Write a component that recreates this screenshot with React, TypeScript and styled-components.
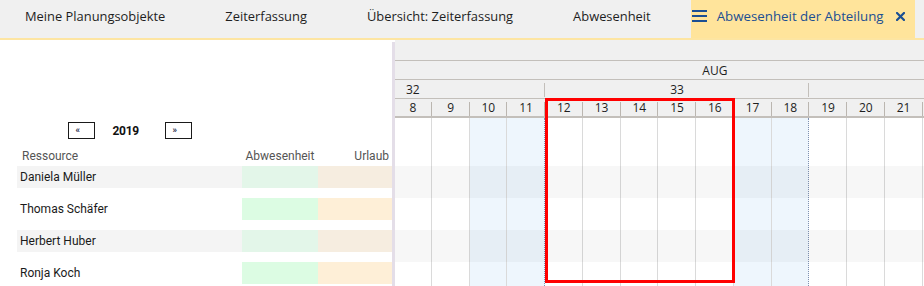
import styled, { createGlobalStyle } from "styled-components";

const DAY_W = 37.75;
const TRACK_SHIFT = -265.25;
// days that fall inside the visible part of the chart
const FIRST_VISIBLE = 8;
const LAST_VISIBLE = 21;

const GlobalStyle = createGlobalStyle`
  html, body {
    margin: 0;
    padding: 0;
    background: #ffffff;
    overflow: hidden;
  }
  * {
    box-sizing: border-box;
  }
`;

const Page = styled.div`
  display: flex;
  flex-direction: column;
  height: 100vh;
  font-family: "Open Sans", sans-serif;
`;

const TabBar = styled.nav`
  display: flex;
  align-items: stretch;
  height: 40px;
  background: #f0f0f0;
  border-bottom: 2px solid #fde5a2;
`;

const Tab = styled.div`
  display: flex;
  align-items: center;
  padding: 0 30px 6px;
  font-size: 12.9px;
  color: #1e1e1e;
  white-space: nowrap;

  &:first-child {
    padding-left: 25px;
  }
`;

const ActiveTab = styled.div`
  display: flex;
  align-items: center;
  gap: 10px;
  margin-left: 10px;
  padding: 0 10px 6px 1px;
  background: #ffe49b;
  color: #1b4f93;
  font-size: 13.3px;
  white-space: nowrap;
`;

const CloseIcon = styled.svg`
  margin-left: 2px;
`;

const Main = styled.div`
  display: flex;
  flex: 1;
  min-height: 0;
`;

const LeftPanel = styled.section`
  width: 392px;
  flex-shrink: 0;
  padding-left: 17px;
  font-family: Roboto, sans-serif;
  font-size: 12px;
`;

const Pager = styled.div`
  display: flex;
  align-items: center;
  justify-content: center;
  width: 225px;
  margin-top: 82px;
  height: 17px;
`;

const PageButton = styled.button`
  width: 27px;
  height: 17px;
  padding: 0 0 1px 7px;
  border: 1px solid #1a1a1a;
  background: #ffffff;
  color: #1c1f4a;
  font-size: 9px;
  font-weight: 700;
  font-family: Roboto, sans-serif;
  text-align: left;
  line-height: 14px;
`;

const Year = styled.span`
  width: 70px;
  padding-left: 18px;
  font-weight: 700;
  font-size: 12px;
  letter-spacing: -0.3px;
  color: #111;
`;

const ColumnHead = styled.div`
  display: grid;
  grid-template-columns: 225px 76px 74px;
  align-items: center;
  height: 20px;
  margin-top: 7px;
  color: #555;
`;

const HeadLabel = styled.span<{ $align: "left" | "center" | "right" }>`
  text-align: ${(p) => p.$align};
  padding: ${(p) => (p.$align === "left" ? "0 0 0 5px" : p.$align === "right" ? "0 3px 0 0" : "0")};
`;

const ResourceRow = styled.div`
  display: grid;
  grid-template-columns: 225px 76px 74px;
  height: 22px;
  margin-bottom: 10px;
`;

const NameCell = styled.div<{ $odd: boolean }>`
  display: flex;
  align-items: center;
  padding-left: 3px;
  background: ${(p) => (p.$odd ? "#f4f4f4" : "#ffffff")};
  color: #1a1a1a;
`;

const AbsenceCell = styled.div<{ $odd: boolean }>`
  background: ${(p) => (p.$odd ? "#e3f6e9" : "#dcfce3")};
`;

const VacationCell = styled.div<{ $odd: boolean }>`
  background: ${(p) => (p.$odd ? "#f6ede0" : "#feefd7")};
`;

const Splitter = styled.div`
  width: 3px;
  flex-shrink: 0;
  margin-top: 2px;
  background: #e4dee8;
`;

const Gantt = styled.section`
  position: relative;
  flex: 1;
  overflow: hidden;
  font-size: 12px;
  color: #1e1e1e;
`;

const Track = styled.div`
  display: flex;
  flex-direction: column;
  height: 100%;
  width: ${31 * DAY_W}px;
  margin-left: ${TRACK_SHIFT}px;
`;

const HeaderRow = styled.div<{ $h: number; $border?: number }>`
  display: flex;
  flex-shrink: 0;
  height: ${(p) => p.$h}px;
  background: #f0f0f0;
  border-bottom: ${(p) => p.$border ?? 1}px solid #c3bfba;
`;

const MonthCell = styled.div`
  flex: 1;
  display: flex;
  align-items: center;
  justify-content: center;
`;

const WeekCell = styled.div<{ $w: number }>`
  width: ${(p) => p.$w}px;
  flex-shrink: 0;
  display: flex;
  align-items: center;
  justify-content: center;
  background: linear-gradient(#c3bfba, #c3bfba) right 3px / 1px 14px no-repeat;
`;

const DayCell = styled.div`
  width: ${DAY_W}px;
  flex-shrink: 0;
  display: flex;
  align-items: center;
  justify-content: center;
  background: linear-gradient(#bbb6b0, #bbb6b0) right 3px / 1px 14px no-repeat;
`;

const Body = styled.div`
  display: grid;
  flex: 1;
  min-height: 0;

  & > * {
    grid-area: 1 / 1;
  }
`;

const Columns = styled.div`
  display: flex;
`;

const DayColumn = styled.div<{ $weekend: boolean; $sunday: boolean }>`
  width: ${DAY_W}px;
  flex-shrink: 0;
  background: ${(p) => (p.$weekend ? "#eef6fd" : "#ffffff")};
  border-right: 1px ${(p) => (p.$sunday ? "dotted #7f90b0" : "solid #dadada")};
`;

const Stripes = styled.div`
  display: flex;
  flex-direction: column;
  padding-top: 48px;
`;

const Stripe = styled.div<{ $odd: boolean }>`
  height: 32px;
  flex-shrink: 0;
  background: ${(p) => (p.$odd ? "rgba(0, 0, 0, 0.03)" : "transparent")};
`;

const Selection = styled.div`
  position: absolute;
  left: 150px;
  top: 58px;
  width: 190px;
  height: 185px;
  border: 3px solid #ff0000;
`;

const tabs = ["Meine Planungsobjekte", "Zeiterfassung", "Übersicht: Zeiterfassung", "Abwesenheit"];
const resources = ["Daniela Müller", "Thomas Schäfer", "Herbert Huber", "Ronja Koch"];
const weeks = [
  { no: 31, start: 1, days: 4 },
  { no: 32, start: 5, days: 7 },
  { no: 33, start: 12, days: 7 },
  { no: 34, start: 19, days: 7 },
  { no: 35, start: 26, days: 6 },
];
const days = Array.from({ length: 31 }, (_, i) => i + 1);
// August 1st 2019 is a Thursday; 0 = Monday
const weekday = (d: number) => (d + 2) % 7;
const isVisible = (d: number) => d >= FIRST_VISIBLE && d <= LAST_VISIBLE;
// a week label sits in the middle of its week; only draw it when that middle is on screen
const weekLabelVisible = (w: { start: number; days: number }) => {
  const mid = w.start + w.days / 2 - 0.5;
  return mid >= FIRST_VISIBLE - 3 && mid <= LAST_VISIBLE;
};

export default function App() {
  return (
    <Page>
      <GlobalStyle />
      <TabBar>
        {tabs.map((t) => (
          <Tab key={t}>{t}</Tab>
        ))}
        <ActiveTab>
          <svg width="15" height="12" viewBox="0 0 15 12">
            <rect x="0" y="0" width="15" height="2" fill="#1b4f93" />
            <rect x="0" y="5" width="15" height="2" fill="#1b4f93" />
            <rect x="0" y="10" width="15" height="2" fill="#1b4f93" />
          </svg>
          <span>Abwesenheit der Abteilung</span>
          <CloseIcon width="9" height="9" viewBox="0 0 9 9">
            <path d="M1 1 L8 8 M8 1 L1 8" stroke="#1b4f93" strokeWidth="2.2" strokeLinecap="square" />
          </CloseIcon>
        </ActiveTab>
      </TabBar>
      <Main>
        <LeftPanel>
          <Pager>
            <PageButton>«</PageButton>
            <Year>2019</Year>
            <PageButton>»</PageButton>
          </Pager>
          <ColumnHead>
            <HeadLabel $align="left">Ressource</HeadLabel>
            <HeadLabel $align="center">Abwesenheit</HeadLabel>
            <HeadLabel $align="right">Urlaub</HeadLabel>
          </ColumnHead>
          {resources.map((r, i) => (
            <ResourceRow key={r}>
              <NameCell $odd={i % 2 === 0}>{r}</NameCell>
              <AbsenceCell $odd={i % 2 === 0} />
              <VacationCell $odd={i % 2 === 0} />
            </ResourceRow>
          ))}
        </LeftPanel>
        <Splitter />
        <Gantt>
          <Track>
            <HeaderRow $h={21} />
            <HeaderRow $h={19}>
              <MonthCell>AUG</MonthCell>
            </HeaderRow>
            <HeaderRow $h={19}>
              {weeks.map((w) => (
                <WeekCell key={w.no} $w={w.days * DAY_W}>
                  {weekLabelVisible(w) ? w.no : ""}
                </WeekCell>
              ))}
            </HeaderRow>
            <HeaderRow $h={19} $border={2}>
              {days.map((d) => (
                <DayCell key={d}>{isVisible(d) ? d : ""}</DayCell>
              ))}
            </HeaderRow>
            <Body>
              <Columns>
                {days.map((d) => (
                  <DayColumn key={d} $weekend={weekday(d) >= 5} $sunday={weekday(d) === 6} />
                ))}
              </Columns>
              <Stripes>
                {resources.map((r, i) => (
                  <Stripe key={r} $odd={i % 2 === 0} />
                ))}
              </Stripes>
            </Body>
          </Track>
          <Selection />
        </Gantt>
      </Main>
    </Page>
  );
}
